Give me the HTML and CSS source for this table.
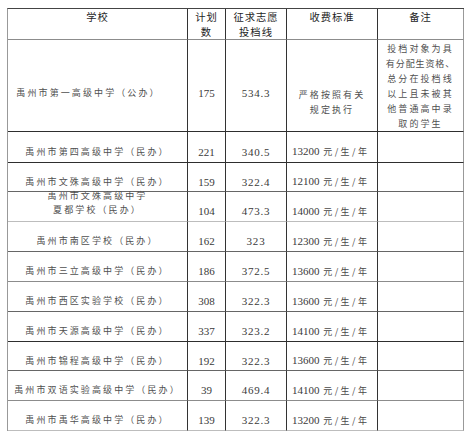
FILE: index.html
```html
<!DOCTYPE html>
<html lang="zh-CN">
<head>
<meta charset="utf-8">
<title>征求志愿投档线</title>
<link rel="stylesheet" href="styles.css">
</head>
<body>
<table class="grid">
  <colgroup>
    <col class="c-school"><col class="c-plan"><col class="c-score"><col class="c-fee"><col class="c-note">
  </colgroup>
  <thead>
    <tr class="head b3">
      <th class="one">学校</th>
      <th class="two">计划<br>数</th>
      <th class="two">征求志愿<br>投档线</th>
      <th class="one">收费标准</th>
      <th class="one">备注</th>
    </tr>
  </thead>
  <tbody>
    <tr class="first b1">
      <td class="school left1">禹州市第一高级中学（公办）</td>
      <td class="num mid1">175</td>
      <td class="num score mid1">534.3</td>
      <td class="rule">严格按照有关<br>规定执行</td>
      <td class="note">投档对象为具<br><span class="tight">有分配生资格、</span><br>总分在投档线<br>以上且未被其<br>他普通高中录<br>取的学生</td>
    </tr>
    <tr class="tall b1">
      <td class="school">禹州市第四高级中学（民办）</td>
      <td class="num">221</td>
      <td class="num score">340.5</td>
      <td class="fee">13200 <span class="unit">元/生/年</span></td>
      <td class="empty"></td>
    </tr>
    <tr class="short b2">
      <td class="school">禹州市文殊高级中学（民办）</td>
      <td class="num">159</td>
      <td class="num score">322.4</td>
      <td class="fee">12100 <span class="unit">元/生/年</span></td>
      <td class="empty"></td>
    </tr>
    <tr class="b4">
      <td class="school wrap"><div class="lift">禹州市文殊高级中学<br>夏都学校（民办）</div></td>
      <td class="num">104</td>
      <td class="num score">473.3</td>
      <td class="fee">14000 <span class="unit">元/生/年</span></td>
      <td class="empty"></td>
    </tr>
    <tr class="b2">
      <td class="school">禹州市南区学校（民办）</td>
      <td class="num">162</td>
      <td class="num score">323</td>
      <td class="fee">12300 <span class="unit">元/生/年</span></td>
      <td class="empty"></td>
    </tr>
    <tr class="b3">
      <td class="school">禹州市三立高级中学（民办）</td>
      <td class="num">186</td>
      <td class="num score">372.5</td>
      <td class="fee">13600 <span class="unit">元/生/年</span></td>
      <td class="empty"></td>
    </tr>
    <tr class="b2">
      <td class="school">禹州市西区实验学校（民办）</td>
      <td class="num">308</td>
      <td class="num score">322.3</td>
      <td class="fee">13600 <span class="unit">元/生/年</span></td>
      <td class="empty"></td>
    </tr>
    <tr class="b1">
      <td class="school">禹州市天源高级中学（民办）</td>
      <td class="num">337</td>
      <td class="num score">323.2</td>
      <td class="fee">14100 <span class="unit">元/生/年</span></td>
      <td class="empty"></td>
    </tr>
    <tr class="short b2">
      <td class="school">禹州市锦程高级中学（民办）</td>
      <td class="num">192</td>
      <td class="num score">322.3</td>
      <td class="fee">13600 <span class="unit">元/生/年</span></td>
      <td class="empty"></td>
    </tr>
    <tr class="b3">
      <td class="school">禹州市双语实验高级中学（民办）</td>
      <td class="num">39</td>
      <td class="num score">469.4</td>
      <td class="fee">14100 <span class="unit">元/生/年</span></td>
      <td class="empty"></td>
    </tr>
    <tr class="b4">
      <td class="school">禹州市禹华高级中学（民办）</td>
      <td class="num">139</td>
      <td class="num score">322.3</td>
      <td class="fee">13200 <span class="unit">元/生/年</span></td>
      <td class="empty"></td>
    </tr>
  </tbody>
</table>
</body>
</html>
```

FILE: styles.css
```css
html, body {
  background: #ffffff;
}
body {
  margin: 8px 0 0 7px;
  font-family: "Noto Sans CJK SC", "Noto Sans", sans-serif;
  color: #4a4a4a;
}

.grid {
  table-layout: fixed;
  border-collapse: separate;
  border-spacing: 0;
  width: 457px;
  border-top: 1px solid #444;
  border-left: 1px solid #999;
}

.c-school { width: 180px; }
.c-plan   { width: 38px; }
.c-score  { width: 61px; }
.c-fee    { width: 91px; }
.c-note   { width: 86px; }

.grid th,
.grid td {
  padding: 0;
  border-right: 1px solid #333;
  border-bottom: 1px solid #888;
  overflow: visible;
}
.grid th:last-child,
.grid td:last-child {
  border-right-color: #999;
}

/* row heights (distance between horizontal rules) */
.head  { height: 31px; }
.grid tbody tr { height: 30px; }
.grid tbody tr.first { height: 92px; }
.grid tbody tr.tall  { height: 31px; }
.grid tbody tr.short { height: 29px; }

/* horizontal rule tones */
.b1 > td, .b1 > th { border-bottom-color: #2e2e2e; }
.b2 > td, .b2 > th { border-bottom-color: #666; }
.b3 > td, .b3 > th { border-bottom-color: #8c8c8c; }
.b4 > td, .b4 > th { border-bottom-color: #bdbdbd; }

/* header */
.grid th {
  vertical-align: top;
  font-weight: normal;
  font-size: 10.3px;
  line-height: 15px;
  color: #1e1e1e;
  text-align: center;
  letter-spacing: 1px;
}
.grid th.one {
  padding-top: 0;
  margin-top: 0;
}
.grid th.two {
  padding-top: 0;
}

/* body cells */
.grid td {
  vertical-align: middle;
  padding-top: 9px;
  line-height: 14px;
  text-align: center;
}

.school {
  font-size: 9px;
  letter-spacing: 2.1px;
  color: #505050;
  white-space: nowrap;
}
.grid td.left1 {
  padding-top: 15px;
  padding-right: 18px;
}
.grid td.wrap {
  padding-top: 0;
}
.lift {
  margin-top: -8px;
  line-height: 14px;
}

.num {
  font-family: "Liberation Serif", "Times New Roman", serif;
  font-size: 11px;
  color: #3a3a3a;
}
.score {
  letter-spacing: 0.8px;
}
.grid td.mid1 {
  padding-top: 15px;
}

.grid td.fee {
  text-align: left;
  padding-left: 5px;
  font-family: "Liberation Serif", "Times New Roman", serif;
  font-size: 11px;
  color: #3a3a3a;
  white-space: nowrap;
}
.unit {
  font-family: "Noto Sans CJK SC", sans-serif;
  font-size: 9px;
  letter-spacing: 2.4px;
  padding-left: 1px;
  color: #4a4a4a;
}

.grid td.rule {
  padding-top: 32px;
  font-size: 9px;
  letter-spacing: 2.1px;
  line-height: 15px;
  color: #505050;
}

.grid td.note {
  padding-top: 0;
  font-size: 9px;
  letter-spacing: 2.1px;
  line-height: 15px;
  color: #505050;
  white-space: nowrap;
}
.tight {
  letter-spacing: 0.9px;
}
```
